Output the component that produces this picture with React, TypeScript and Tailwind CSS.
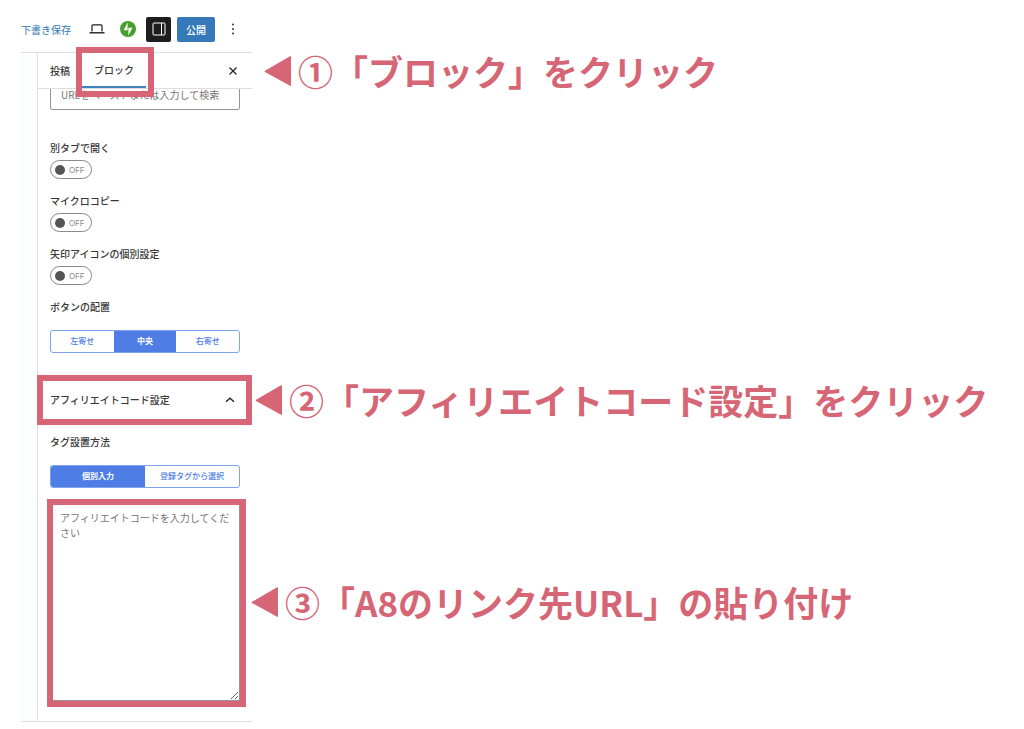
import type { ReactNode } from "react";
import { clsx } from "clsx";

const toggles = [
  { id: "new-tab", label: "別タブで開く" },
  { id: "micro-copy", label: "マイクロコピー" },
  { id: "arrow-icon", label: "矢印アイコンの個別設定" },
];

function Callout({ className, children }: { className: string; children: ReactNode }) {
  return (
    <div
      className={clsx(
        "pointer-events-none absolute left-full flex -translate-y-1/2 items-center gap-[6px] whitespace-nowrap text-[35px] leading-[50px] font-bold text-[#d66675]",
        className,
      )}
    >
      <svg viewBox="0 0 28 32" className="h-8 w-7" fill="currentColor" aria-hidden="true">
        <path d="M1 15.8 26 1.300q1-.5 1 .6v28.400q0 1-1 .5L1 17q-1-.6 0-1.200z" />
      </svg>
      <span>{children}</span>
    </div>
  );
}

function Frame({ className }: { className: string }) {
  return <div className={clsx("pointer-events-none absolute border-6 border-[#d66675]", className)} />;
}

function Toggle({ id, label }: { id: string; label: string }) {
  return (
    <div className="flex flex-col items-start gap-1">
      <label htmlFor={id} className="leading-4 font-medium">
        {label}
      </label>
      <span className="relative flex h-[19px] w-[42px] items-center gap-1 rounded-full border border-[#8a8a8a] pl-1">
        <input id={id} type="checkbox" role="switch" className="absolute inset-0 m-0 cursor-pointer appearance-none rounded-full" />
        <span className="size-[10px] rounded-full bg-[#555]" />
        <span className="font-['Inter',sans-serif] text-[8px] leading-4 text-[#8a8a8a]">OFF</span>
      </span>
    </div>
  );
}

function ButtonGroup({ label, items, active }: { label: string; items: string[]; active: number }) {
  return (
    <div role="group" aria-label={label} className="flex h-[23px] overflow-hidden rounded-[3px] border border-[#7fa3ee]">
      {items.map((item, i) => (
        <button
          key={item}
          type="button"
          aria-pressed={i === active}
          className={clsx(
            "flex-1 pb-px text-[8px] leading-4",
            i === active ? "bg-[#4e7de6] font-bold text-white" : "font-medium text-[#4e7de6]",
          )}
        >
          {item}
        </button>
      ))}
    </div>
  );
}

function Toolbar() {
  return (
    <header className="flex h-[53px] items-center border-b border-[#e0e0e0] pt-[6px] text-[10px]">
      <button type="button" className="mr-[18px] w-[50px] text-left whitespace-nowrap text-[#3178b5]">
        下書き保存
      </button>
      <button type="button" aria-label="プレビュー" className="mr-[15px]">
        <svg viewBox="0 0 16 14" className="h-[14px] w-4" fill="none" stroke="#1e1e1e">
          <path d="M3 9.500V3.700q0-.9.9-.9h8.200q.9 0 .9.900v5.800" strokeWidth="1.200" />
          <path d="M.5 10.800h15" strokeWidth="1.400" />
        </svg>
      </button>
      <button type="button" aria-label="Jetpack" className="mr-[10px]">
        <svg viewBox="0 0 32 32" className="size-4">
          <circle cx="16" cy="16" r="16" fill="#469f2d" />
          <path d="M15.200 18.700H7.200l8-15.600zM16.800 28.900V13.300h8z" fill="#fff" />
        </svg>
      </button>
      <button type="button" aria-label="設定" className="mr-[6px] flex size-[25px] items-center justify-center rounded-[2px] bg-[#1e1e1e]">
        <svg viewBox="0 0 14 14" className="size-[14px]" fill="none" stroke="#fff">
          <rect x="1" y="1" width="12" height="12" rx="1" />
          <path d="M9.500 1v12" />
        </svg>
      </button>
      <button type="button" className="h-[25px] w-[38px] rounded-[2px] bg-[#3579b8] font-medium text-white">
        公開
      </button>
      <button type="button" aria-label="オプション" className="ml-[15px]">
        <svg viewBox="0 0 6 12" className="h-3 w-[6px]" fill="#1e1e1e">
          <circle cx="3" cy="1.500" r=".9" />
          <circle cx="3" cy="6" r=".9" />
          <circle cx="3" cy="10.500" r=".9" />
        </svg>
      </button>
    </header>
  );
}

export default function App() {
  return (
    <main className="min-h-screen overflow-x-hidden bg-white pl-[21px] font-['Noto_Sans_CJK_JP',sans-serif] text-[10px] text-[#383838]">
      <div className="w-[231px]">
        <Toolbar />
        <div className="border-b border-[#e0e0e0] bg-[#fbfdfe] pl-4">
          <aside className="border-l border-[#e0e0e0] bg-white pb-5">
            <div className="relative z-10 flex h-9 items-stretch border-b border-[#ddd] pr-[14px] pl-3">
              <button type="button" className="w-8 text-left font-medium">
                投稿
              </button>
              <div className="relative flex">
                <button type="button" className="w-16 border-b-2 border-[#3f83bb] font-medium">
                  ブロック
                </button>
                <Frame className="-top-1.5 -right-2 -bottom-[9px] -left-1.5" />
              </div>
              <button type="button" aria-label="閉じる" className="ml-auto">
                <svg viewBox="0 0 10 10" className="size-[10px]" fill="none" stroke="#1e1e1e" strokeWidth="1.200">
                  <path d="m1.500 1.500 7 7m0-7-7 7" />
                </svg>
              </button>
              <Callout className="top-[18px] ml-3">①「ブロック」をクリック</Callout>
            </div>

            <div className="px-3">
              <div className="flex h-[21px] items-end overflow-hidden">
                <input
                  type="text"
                  aria-label="リンク先URL"
                  placeholder="URLをペーストまたは入力して検索"
                  className="h-8 w-full shrink-0 rounded-[2px] border border-[#949494] px-[10px] placeholder:text-[#757575]"
                />
              </div>

              <div className="mt-[30px] flex flex-col gap-[14px]">
                {toggles.map((t) => (
                  <Toggle key={t.id} id={t.id} label={t.label} />
                ))}
              </div>

              <p className="mt-[14px] mb-[15px] leading-4 font-medium">ボタンの配置</p>
              <ButtonGroup label="ボタンの配置" items={["左寄せ", "中央", "右寄せ"]} active={1} />
            </div>

            <div className="relative mt-7">
              <button type="button" className="flex h-[38px] w-full items-center justify-between pr-4 pb-px pl-3 font-medium">
                アフィリエイトコード設定
                <svg viewBox="0 0 12 12" className="size-3" fill="none" stroke="#1e1e1e" strokeWidth="1.300">
                  <path d="m2 7.800 4-3.600 4 3.600" />
                </svg>
              </button>
              <Frame className="-inset-y-1.5 right-0 -left-px" />
              <Callout className="top-1/2 ml-[3px]">②「アフィリエイトコード設定」をクリック</Callout>
            </div>

            <div className="px-3 pt-[15px]">
              <p className="mb-[15px] leading-4 font-medium">タグ設置方法</p>
              <ButtonGroup label="タグ設置方法" items={["個別入力", "登録タグから選択"]} active={0} />
              <div className="relative mt-[14px]">
                <textarea
                  aria-label="アフィリエイトコード"
                  placeholder="アフィリエイトコードを入力してください"
                  className="block h-[199px] w-full border border-[#949494] pt-[7px] pr-1 pl-[9px] leading-[15px] placeholder:text-[#757575]"
                />
                <Frame className="-top-[3px] -right-1.5 -bottom-1.5 -left-[3px]" />
                <Callout className="top-1/2 ml-[11px]">③「A8のリンク先URL」の貼り付け</Callout>
              </div>
            </div>
          </aside>
        </div>
      </div>
    </main>
  );
}
